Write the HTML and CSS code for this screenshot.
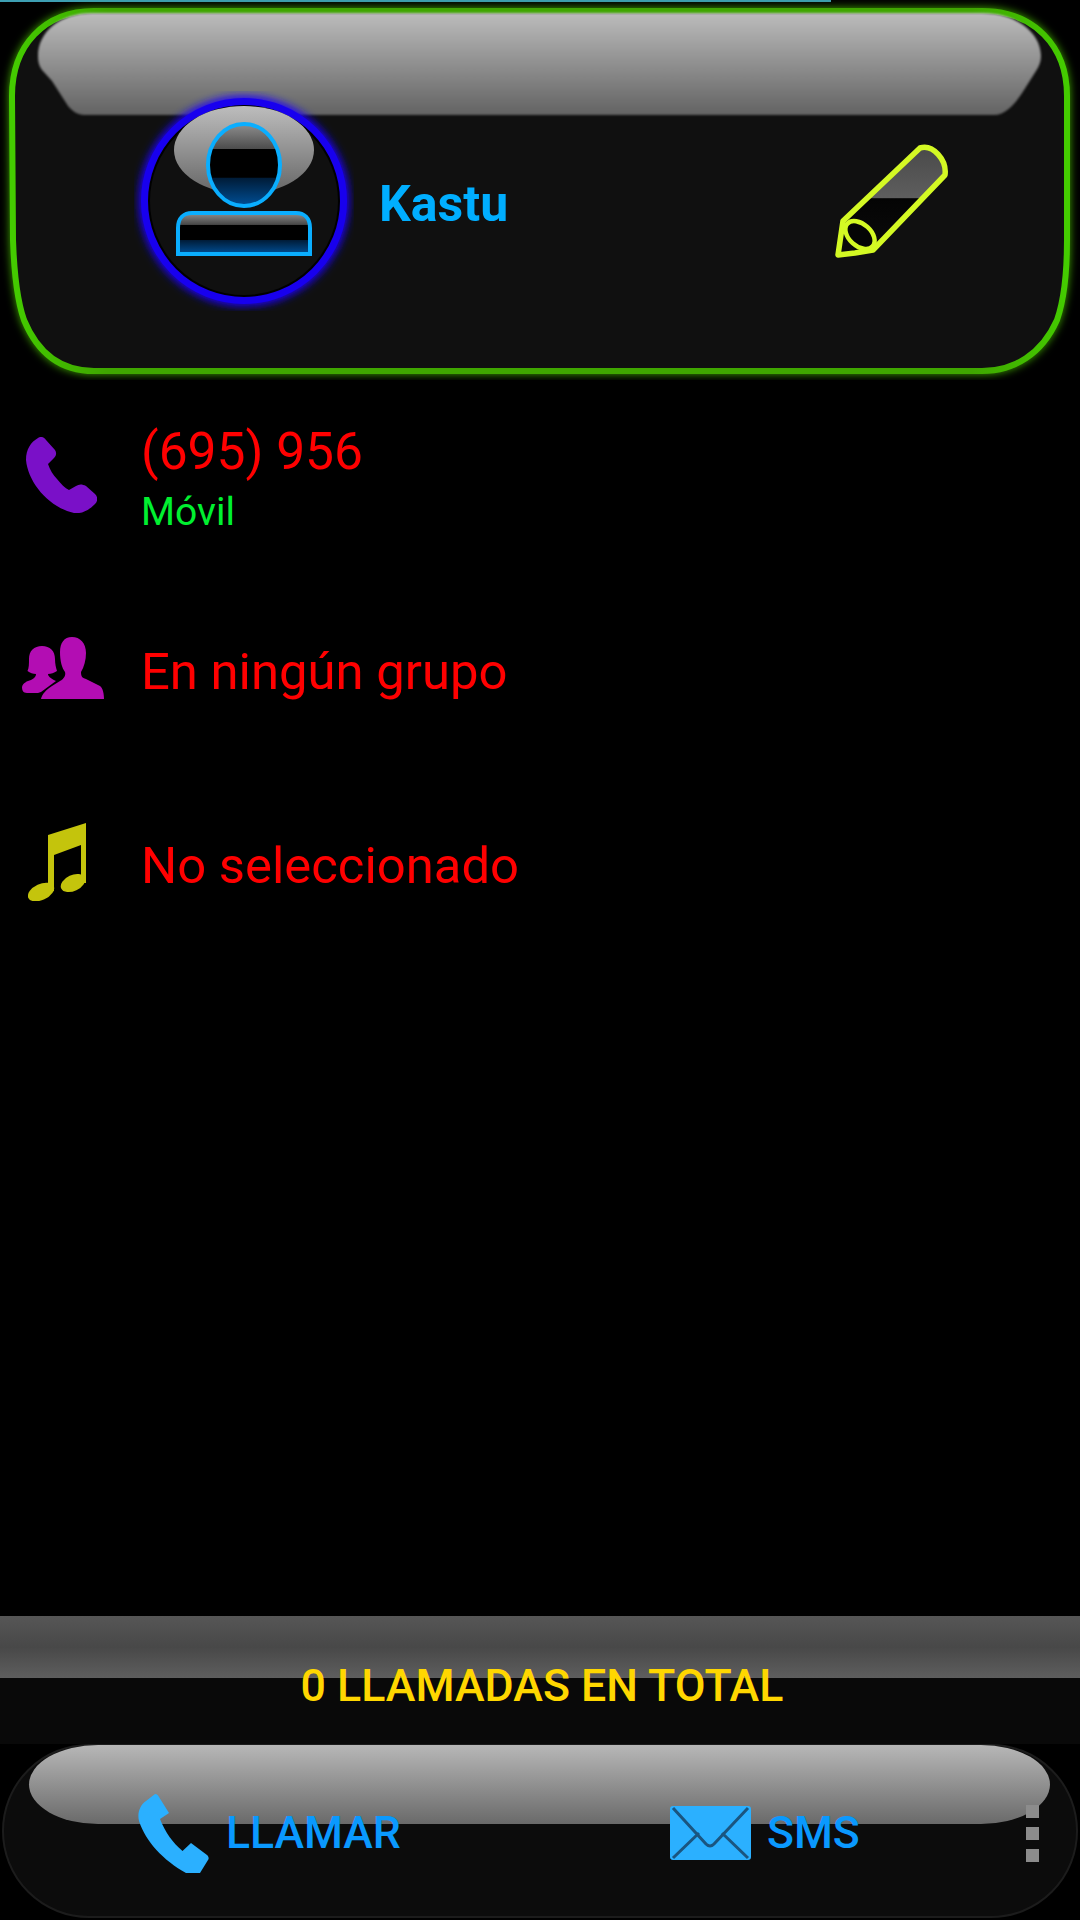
FILE: index.html
```html
<!DOCTYPE html>
<html lang="es">

<head>
    <meta charset="UTF-8">
    <meta name="viewport" content="width=device-width, initial-scale=1.0">
    <title>Kastu</title>
    <link rel="stylesheet" href="styles.css">
</head>

<body>
    <header class="card">
        <div class="top-strip"></div>
        <svg class="card-frame" viewBox="0 0 1080 380" width="1080" height="380">
            <defs>
                <linearGradient id="glossCard" x1="0" y1="0" x2="0" y2="1">
                    <stop offset="0" stop-color="#bcbcbc" />
                    <stop offset="1" stop-color="#636363" />
                </linearGradient>
                <linearGradient id="frameStroke" x1="0" y1="0" x2="1" y2="0">
                    <stop offset="0" stop-color="#44cc00" />
                    <stop offset="0.09" stop-color="#3fa600" />
                    <stop offset="0.91" stop-color="#3fa600" />
                    <stop offset="1" stop-color="#44cc00" />
                </linearGradient>
            </defs>
            <path class="frame-line" stroke="url(#frameStroke)" d="M94 11 H982 C1034 11 1067 46 1067 96 V240 C1067 270 1064 300 1057 320 C1042 354 1014 371 982 371 H94 C62 371 38 354 24 320 C17 300 14 270 13 240 L12 96 C12 46 44 11 94 11 Z" />
            <path class="frame-gloss" fill="url(#glossCard)" d="M92 13 H982 C1018 13 1041 34 1041 56 C1041 62 1039 66 1036 71 L1024 90 C1016 103 1006 115 994 115 H84 C78 115 72 111 68 106 L52 81 L42 70 C39 66 38 62 38 56 C38 32 60 13 92 13 Z" />
        </svg>

        <svg class="avatar" viewBox="0 0 220 220" width="220" height="220">
            <defs>
                <filter id="ringGlow" x="-20%" y="-20%" width="140%" height="140%">
                    <feGaussianBlur stdDeviation="4" />
                </filter>
                <linearGradient id="glossAvatar" x1="0" y1="0" x2="0" y2="1">
                    <stop offset="0" stop-color="#bdbdbd" />
                    <stop offset="1" stop-color="#666" />
                </linearGradient>
                <linearGradient id="headFill" x1="0" y1="0" x2="0" y2="1">
                    <stop offset="0" stop-color="#8e8e8e" />
                    <stop offset="0.3" stop-color="#4d4d4d" />
                    <stop offset="0.31" stop-color="#000" />
                    <stop offset="0.65" stop-color="#000" />
                    <stop offset="0.66" stop-color="#001c38" />
                    <stop offset="1" stop-color="#004f96" />
                </linearGradient>
                <linearGradient id="bodyFill" x1="0" y1="0" x2="0" y2="1">
                    <stop offset="0" stop-color="#8e8e8e" />
                    <stop offset="0.28" stop-color="#484848" />
                    <stop offset="0.29" stop-color="#000" />
                    <stop offset="0.65" stop-color="#000" />
                    <stop offset="0.66" stop-color="#001c38" />
                    <stop offset="1" stop-color="#004f96" />
                </linearGradient>
            </defs>
            <circle class="ring-glow" cx="110" cy="110" r="100" filter="url(#ringGlow)" />
            <circle class="ring" cx="110" cy="110" r="99" />
            <circle class="ring-inner" cx="110" cy="110" r="95" />
            <ellipse cx="110" cy="59" rx="70" ry="44" fill="url(#glossAvatar)" />
            <ellipse class="avatar-line" cx="110" cy="74" rx="36" ry="41" fill="url(#headFill)" />
            <path class="avatar-line" fill="url(#bodyFill)" d="M44 163 V137 C44 127 50 122 58 122 H162 C170 122 176 127 176 137 V163 Z" />
        </svg>

        <span class="card-name">Kastu</span>

        <svg class="pencil" viewBox="0 0 113 114" width="113" height="114">
            <defs>
                <linearGradient id="pencilFill" gradientUnits="userSpaceOnUse" x1="0" y1="0" x2="0" y2="114">
                    <stop offset="0" stop-color="#484848" />
                    <stop offset="0.47" stop-color="#5e5e5e" />
                    <stop offset="0.48" stop-color="#040404" />
                    <stop offset="1" stop-color="#0c0c0c" />
                </linearGradient>
            </defs>
            <path class="pencil-line" fill="url(#pencilFill)" d="M3 111 L8 77 L85 4 C98 0 112 16 110 31 L38 106 L20 109 Z" />
            <ellipse class="pencil-line pencil-nib" cx="25" cy="91" rx="17" ry="11" transform="rotate(42 25 91)" />
        </svg>
    </header>

    <main class="details">
        <div class="row row-phone">
            <svg class="row-icon icon-phone" viewBox="0 0 71 76" width="71" height="76">
                <path d="M12 1 C15 -1 18 0 20 3 L29 13 C31 16 30 19 28 21 L22 27 C24 33 27 38 31 42 C35 47 39 51 43 53 L50 49 C53 47 56 47 60 49 L69 57 C72 60 72 64 69 67 C62 74 55 77 48 76 C22 70 2 45 0 23 C0 12 5 5 12 1 Z" />
            </svg>
            <div class="row-text">
                <div class="row-title">(695) 956</div>
                <div class="row-sub">Móvil</div>
            </div>
        </div>

        <div class="row row-group">
            <svg class="row-icon icon-group" viewBox="0 0 82 62" width="82" height="62">
                <path d="M20 9 C28 9 33 14 33 22 C33 27 34 31 35 34 C32 36 29 37 26 37 C26 39 28 41 34 44 L19 55 L16 56 H5 C1 56 0 53 0 50 C1 46 5 44 9 43 C13 41 14 39 14 37 C11 37 8 36 5.5 34 C7 31 7 27 7 22 C7 14 12 9 20 9 Z" />
                <path d="M50 0 C58 0 64 6 64 16 C64 23 62 30 59 35 C59 39 60 41 64 42 L78 49 C81 51 82 57 82 62 H19 C20 57 24 53 30 49 L38 44 C42 42 44 38 43 35 C40 31 38 24 38 15 C38 6 42 0 50 0 Z" />
            </svg>
            <div class="row-title">En ningún grupo</div>
        </div>

        <div class="row">
            <svg class="row-icon icon-note" viewBox="0 0 58 78" width="58" height="78">
                <path d="M20 12 L58 0 V60 H53 V22 L26 32 V68 H20 Z" />
                <ellipse cx="13" cy="69" rx="14" ry="8" transform="rotate(-25 13 69)" />
                <ellipse cx="45" cy="60" rx="13" ry="8" transform="rotate(-25 45 60)" />
            </svg>
            <div class="row-title">No seleccionado</div>
        </div>
    </main>

    <footer class="bottom">
        <div class="totals">
            <div class="totals-gloss"></div>
            <span class="totals-text">0 LLAMADAS EN TOTAL</span>
        </div>
        <nav class="actions">
            <div class="actions-bg"></div>
            <div class="actions-gloss"></div>
            <a class="action action-call">
                <svg viewBox="0 0 71 79" width="71" height="79">
                    <path d="M8 7 L17 0 C19 0 20 1 21 3 L31 19 L22 25 C27 38 35 49 44.5 57 L53 49 L69 61 C71 63 71 65 70 66 L62 79 H48 C25 66 8 48 1 27 C-1 19 2 11 8 7 Z" />
                </svg>
                <span>LLAMAR</span>
            </a>
            <a class="action action-sms">
                <svg viewBox="0 0 81 54" width="81" height="54">
                    <rect width="81" height="54" rx="3" />
                    <path class="envelope-line" d="M3 2 L36 38 Q40 42 44 38 L78 2 M3 52 L29 27 M78 52 L52 27" />
                </svg>
                <span>SMS</span>
            </a>
            <div class="menu-dots">
                <i></i>
                <i></i>
                <i></i>
            </div>
        </nav>
    </footer>
</body>

</html>
```

FILE: styles.css
```css
* {
    box-sizing: border-box;
}

body {
    font-family: 'Roboto', 'Liberation Sans', sans-serif;
    background-color: #000;
    margin: 0;
    width: 1080px;
    height: 1920px;
    overflow: hidden;
    display: flex;
    flex-direction: column;
}

/* contact card */
.card {
    position: relative;
    height: 380px;
    padding: 22px 132px 0 134px;
    display: flex;
    align-items: center;
}

.top-strip {
    position: absolute;
    top: 0;
    left: 0;
    width: 831px;
    height: 2px;
    background-color: #3d9fb3;
}

.card-frame {
    position: absolute;
    top: 0;
    left: 0;
}

.frame-line {
    fill: #101010;
    stroke-width: 6;
    filter: drop-shadow(0 0 4px #3fa600);
}

.frame-gloss {
    filter: blur(1px);
}

.avatar,
.card-name,
.pencil {
    position: relative;
    flex: none;
}

.ring-glow {
    fill: none;
    stroke: #1a00ff;
    stroke-width: 10;
}

.ring {
    fill: none;
    stroke: #1800ee;
    stroke-width: 8;
}

.ring-inner {
    fill: #101010;
    stroke: #000;
    stroke-width: 2;
}

.avatar-line {
    stroke: #0aaeff;
    stroke-width: 4;
}

.card-name {
    margin: 6px 0 0 25px;
    font-size: 50px;
    line-height: 56px;
    font-weight: 700;
    color: #00aeff;
}

.pencil {
    margin-left: auto;
    filter: blur(0.5px);
}

.pencil-line {
    stroke: #d4f924;
    stroke-width: 5.5;
    stroke-linejoin: round;
}

.pencil-nib {
    fill: #050505;
    stroke-width: 4.5;
}

/* detail rows */
.details {
    margin-top: 42px;
}

.row {
    height: 100px;
    display: flex;
    align-items: center;
}

.row-phone {
    height: 112px;
    margin-bottom: 87px;
}

.row-group {
    margin-bottom: 94px;
}

.row-icon {
    flex: none;
    margin-bottom: 6px;
}

.icon-phone {
    margin: 0 44px 6px 26px;
    fill: #7a10c8;
}

.icon-group {
    margin: 0 37px 6px 22px;
    fill: #b30db3;
}

.icon-note {
    margin: 0 55px 6px 28px;
    fill: #c4c40c;
}

.row-title {
    padding-top: 2px;
    font-size: 50.8px;
    line-height: 58px;
    color: #ff0000;
}

.row-phone .row-title {
    padding-top: 1px;
    font-size: 51.5px;
}

.row-sub {
    margin-top: 9px;
    font-size: 39px;
    line-height: 44px;
    color: #00f030;
}

/* bottom bars */
.bottom {
    margin-top: auto;
}

.totals {
    position: relative;
    height: 128px;
    padding: 44px 0 0 4px;
    background-color: #090909;
    text-align: center;
}

.totals-gloss {
    position: absolute;
    top: 0;
    left: 0;
    right: 0;
    height: 62px;
    background: linear-gradient(to bottom, #565656, #484848 50%, #5e5e5e);
}

.totals-text {
    position: relative;
    font-size: 44.7px;
    line-height: 52px;
    font-weight: 500;
    color: #ffd700;
}

.actions {
    position: relative;
    height: 176px;
    padding: 2px 0 0 138px;
    display: flex;
    align-items: center;
}

.actions-bg {
    position: absolute;
    top: 0;
    left: 2px;
    right: 2px;
    bottom: 2px;
    background-color: #0c0c0c;
    border: 2px solid #1c1c1c;
    border-radius: 88px;
}

.actions-gloss {
    position: absolute;
    top: 1px;
    left: 29px;
    width: 1021px;
    height: 79px;
    background: linear-gradient(to bottom, #b7b7b7, #6a6a6a);
    border-radius: 70px / 40px;
}

.action {
    position: relative;
    display: flex;
    align-items: center;
    gap: 17px;
    font-size: 44.5px;
    line-height: 52px;
    font-weight: 500;
    color: #0a99ff;
}

.action svg {
    fill: #2bb0ff;
    flex: none;
}

.action-call {
    width: 532px;
}

.action-sms {
    width: 356px;
    gap: 16px;
}

.envelope-line {
    fill: none;
    stroke: #1a5580;
    stroke-width: 3;
}

.menu-dots {
    position: relative;
    display: flex;
    flex-direction: column;
    gap: 9px;
}

.menu-dots i {
    display: block;
    width: 13px;
    height: 13px;
    background-color: #8c8c8c;
}
```
